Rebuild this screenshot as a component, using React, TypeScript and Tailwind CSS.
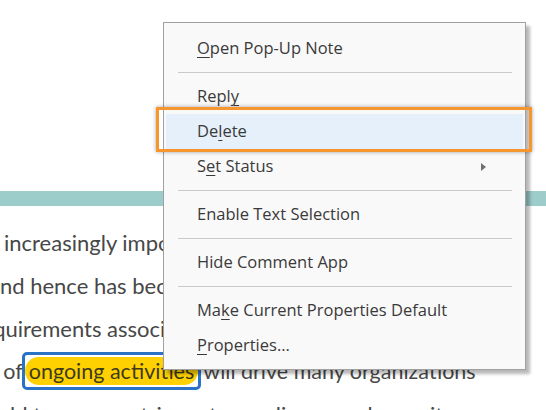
const Key = ({ c }: { c: string }) => (
  <span className="underline decoration-1 underline-offset-[3px]">{c}</span>
);

const Sep = () => (
  <div className="flex h-[13px] items-center pl-[14px] pr-[13px]">
    <div className="h-px w-full bg-[#cacaca]" />
  </div>
);

const Item = ({ children }: { children: React.ReactNode }) => (
  <div className="flex h-[35px] items-center pl-[33px]">{children}</div>
);

const App = () => {
  return (
    <div className="relative h-[410px] w-[546px] overflow-hidden bg-white font-['Lato',sans-serif]">
      <div className="h-[191px]" />
      <div className="h-[15px] bg-[#9ccdcb]" />

      <div className="whitespace-nowrap pt-[15px] text-[22px] leading-[43px] text-[#474747]">
        <div className="ml-[4px]">increasingly important for every business</div>
        <div className="ml-[-11px]">and hence has become a priority</div>
        <div className="ml-[-26px]">requirements associated with the growth</div>
        <div className="ml-[-10px] text-[21.5px]">
          t of
          <span className="ml-[-1px] inline-block rounded-[5px] border-[3px] border-[#2a72c6] py-[2px]">
            <span className="block rounded-full bg-[#ffd100] px-[4px] leading-[28px] text-[#3d3a1a]">
              ongoing activities
            </span>
          </span>
          <span className="ml-[2px]">will drive many organizations</span>
        </div>
        <div className="ml-[10px]">ld to a more stringent compliance and security</div>
      </div>

      {/* context menu */}
      <div className="absolute left-[163px] top-[22px] w-[363px] border border-[#a0a0a0] bg-[#f9f9f9] pb-[6px] pt-[8px] font-['Open_Sans',sans-serif] text-[16.5px] text-[#3a3a3a] shadow-[4px_4px_3px_rgba(0,0,0,0.28)]">
        <Item>
          <Key c="O" />
          pen Pop-Up Note
        </Item>
        <Sep />
        <Item>
          Repl
          <Key c="y" />
        </Item>
        <div className="mx-[2px] flex h-[35px] items-center bg-[#e5f0fb] pl-[31px]">
          De
          <Key c="l" />
          ete
        </div>
        <div className="flex h-[35px] items-center justify-between pl-[33px] pr-[39px]">
          <span>
            S<Key c="e" />t Status
          </span>
          <span className="h-0 w-0 border-y-[4px] border-l-[5px] border-y-transparent border-l-[#707070]" />
        </div>
        <Sep />
        <Item>Enable Text Selection</Item>
        <Sep />
        <Item>Hide Comment App</Item>
        <Sep />
        <Item>
          Ma
          <Key c="k" />e Current Properties Default
        </Item>
        <Item>
          <Key c="P" />
          roperties...
        </Item>
      </div>

      {/* highlight annotation */}
      <div className="absolute left-[156px] top-[107px] h-[45px] w-[376px] border-[3px] border-[#f7962f] shadow-[0_0_4px_rgba(0,0,0,0.35)]" />
    </div>
  );
};

export default App;
